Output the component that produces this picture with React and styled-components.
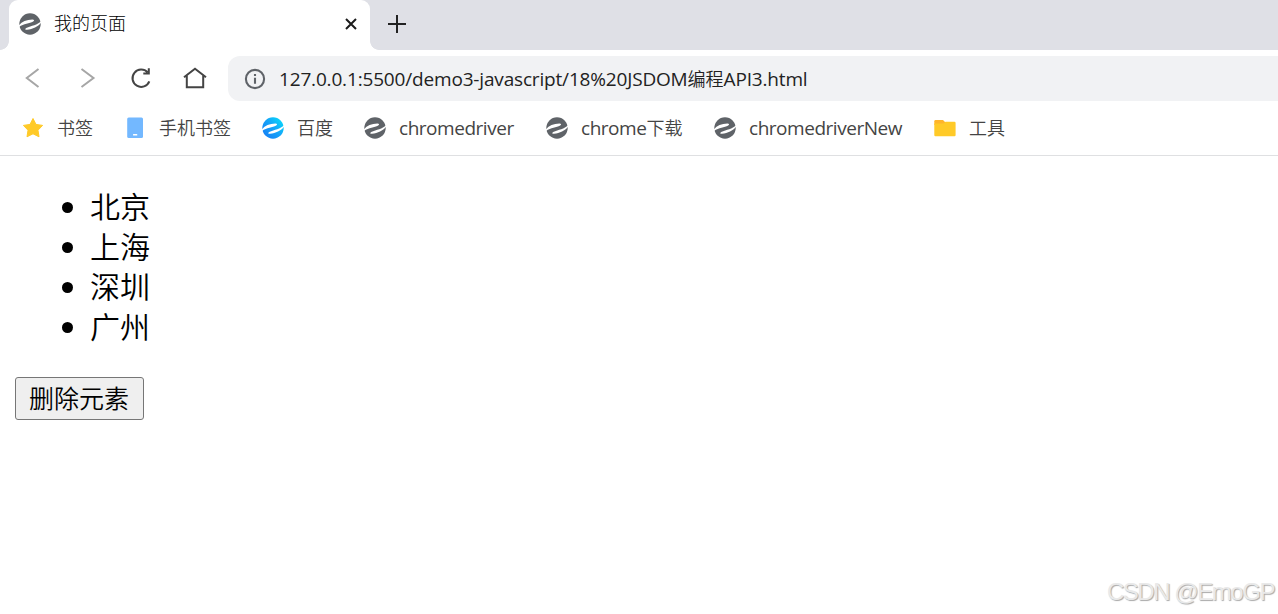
import React, { useState } from 'react'
import styled, { createGlobalStyle } from 'styled-components'

const bookmarks = [
    { icon: 'star', label: '书签', width: 36, gap: 31 },
    { icon: 'phone', label: '手机书签', width: 72, gap: 31 },
    { icon: 'blue', label: '百度', width: 36, gap: 31 },
    { icon: 'grey', label: 'chromedriver', width: 115, gap: 32 },
    { icon: 'grey', label: 'chrome下载', width: 102, gap: 31 },
    { icon: 'grey', label: 'chromedriverNew', width: 154, gap: 31 },
    { icon: 'folder', label: '工具', width: 36, gap: 0 }
]

// Chinese runs are set one size smaller than the latin text around them
const MixedText = ({ children }) => children.split(/([\u4e00-\u9fff]+)/).filter(Boolean).map((part, i) => (
    /[\u4e00-\u9fff]/.test(part) ? <Han key={i}>{part}</Han> : part
))

const Logo = ({ blue }) => (
    <Icon viewBox="0 0 22 22">
        <defs>
            <linearGradient id="logoBlue" x1="0.1" y1="0.8" x2="0.9" y2="0.1">
                <stop offset="0" stopColor="#1583f5" />
                <stop offset="0.5" stopColor="#16a4f8" />
                <stop offset="1" stopColor="#08d8fb" />
            </linearGradient>
        </defs>
        <circle cx="11" cy="11" r="10.7" fill={blue ? 'url(#logoBlue)' : '#5f6368'} />
        <path d="M0 12.2C3 8.6 7.5 6.6 13.4 6.5C15.4 6.5 15.6 7.7 14.2 8.5C10.3 10.7 5 10.4 0 14Z" fill="#fff" />
        <path d="M22 8.2C18.5 12 12.5 12.6 7.2 15C5.6 15.9 6.2 17 8 16.8C13.8 16.1 19 13.8 22 9.8Z" fill="#fff" />
    </Icon>
)

const BookmarkIcon = ({ name }) => {
    if(name === 'star') {
        return (
            <Icon viewBox="0 0 22 22">
                <path d="M11 1.5L14 7.4L20.6 8.4L16 13.2L17 19.8L11 16.8L5 19.8L6 13.2L1.4 8.4L8 7.4Z" fill="#ffca28" stroke="#ffca28" strokeWidth="1" strokeLinejoin="round" />
            </Icon>
        )
    }

    if(name === 'phone') {
        return (
            <Icon viewBox="0 0 22 22">
                <rect x="3.2" y="0.5" width="15.8" height="20.5" rx="1.5" fill="#73b8ff" />
                <rect x="9" y="17" width="4.3" height="1.5" rx="0.5" fill="#fff" />
            </Icon>
        )
    }

    if(name === 'folder') {
        return (
            <Icon viewBox="0 0 22 22">
                <path d="M0.3 4.2Q0.3 3 1.5 3H9L11 5V8H0.3Z" fill="#ffb52b" />
                <path d="M0.3 6.5H9.5L11.5 4.8H20.5Q21.6 4.8 21.6 6V18Q21.6 19.2 20.5 19.2H1.4Q0.3 19.2 0.3 18Z" fill="#ffca28" />
            </Icon>
        )
    }

    return <Logo blue={name === 'blue'} />
}

const App = () => {
    const [cities, setCities] = useState(['北京', '上海', '深圳', '广州'])

    return (
        <Window>
            <GlobalStyle />
            <TabStrip>
                <Tab>
                    <Logo />
                    <TabTitle>我的页面</TabTitle>
                    <CloseIcon viewBox="0 0 12 12">
                        <path d="M1 1L11 11M11 1L1 11" />
                    </CloseIcon>
                </Tab>
                <NewTabIcon viewBox="0 0 18 18">
                    <path d="M9 0V18M0 9H18" />
                </NewTabIcon>
            </TabStrip>
            <Toolbar>
                <NavIcon viewBox="0 0 24 24" color="#a6a6a6">
                    <path d="M17.5 3L5.8 12L17.5 21" />
                </NavIcon>
                <NavIcon viewBox="0 0 24 24" color="#a6a6a6">
                    <path d="M6.5 3L18.5 12L6.5 21" />
                </NavIcon>
                <NavIcon viewBox="0 0 24 24" color="#444">
                    <path d="M20.3 15.4A8.7 8.7 0 1 1 18.6 6.3M19.8 2.3V7.5H14.3" />
                </NavIcon>
                <NavIcon viewBox="0 0 24 24" color="#444">
                    <path d="M1 11.3L12 2.8L23 11.3M3.8 9.5V21.2H20.2V9.5" />
                </NavIcon>
                <AddressBar>
                    <InfoIcon viewBox="0 0 22 22">
                        <circle cx="11" cy="11" r="9.1" />
                        <path d="M11 9.7V15.8M11 6V8" />
                    </InfoIcon>
                    <Address>
                        <MixedText>127.0.0.1:5500/demo3-javascript/18%20JSDOM编程API3.html</MixedText>
                    </Address>
                </AddressBar>
            </Toolbar>
            <BookmarkBar>
                {bookmarks.map(({ icon, label, width, gap }) => (
                    <Bookmark key={label} gap={gap}>
                        <BookmarkIcon name={icon} />
                        <BookmarkLabel width={width}>
                            <MixedText>{label}</MixedText>
                        </BookmarkLabel>
                    </Bookmark>
                ))}
            </BookmarkBar>
            <Page>
                <CityList>
                    {cities.map(city => <City key={city}>{city}</City>)}
                </CityList>
                <DeleteButton onClick={() => setCities(cities.slice(1))}>删除元素</DeleteButton>
            </Page>
            <Watermark>CSDN @EmoGP</Watermark>
        </Window>
    )
}

const GlobalStyle = createGlobalStyle`
    body {
        margin: 0;
        background: #fff;
    }
`

const Window = styled.div`
    display: flex;
    flex-direction: column;
    position: relative;
    height: 614px;
    overflow: hidden;
    color: #000;
    font-family: 'Open Sans', 'Noto Sans CJK SC', sans-serif;
    font-weight: 350;
`

const Icon = styled.svg`
    flex: none;
    width: 22px;
    height: 22px;
`

const Han = styled.span`
    font-size: 18px;
    font-weight: 350;
    letter-spacing: 0;
`

const TabStrip = styled.div`
    display: flex;
    align-items: center;
    flex: none;
    height: 50px;
    background: #dfe0e6;
`

const Tab = styled.div`
    box-sizing: border-box;
    display: flex;
    align-items: center;
    position: relative;
    width: 361px;
    height: 50px;
    margin-left: 9px;
    padding: 0 13px 2px 10px;
    background: #fff;
    border-radius: 9px 9px 0 0;

    &::before,
    &::after {
        content: '';
        position: absolute;
        bottom: 0;
        width: 9px;
        height: 9px;
    }

    &::before {
        right: 100%;
        background: radial-gradient(circle at 0 0, transparent 8.5px, #fff 9.2px);
    }

    &::after {
        left: 100%;
        background: radial-gradient(circle at 100% 0, transparent 8.5px, #fff 9.2px);
    }
`

const TabTitle = styled.span`
    flex: 1;
    margin-left: 13px;
    padding-bottom: 2px;
    font-size: 18px;
    font-weight: 300;
    line-height: 22px;
`

const CloseIcon = styled.svg`
    width: 12px;
    height: 12px;
    stroke: #1b1b1b;
    stroke-width: 2;
`

const NewTabIcon = styled.svg`
    width: 18px;
    height: 18px;
    margin: 0 0 2px 18px;
    stroke: #222;
    stroke-width: 2;
`

const Toolbar = styled.div`
    display: flex;
    align-items: center;
    flex: none;
    gap: 30px;
    height: 45px;
    padding: 6px 0 0 21px;
`

const NavIcon = styled.svg`
    flex: none;
    width: 24px;
    height: 24px;
    margin-bottom: 1px;
    fill: none;
    stroke: ${props => props.color};
    stroke-width: 2;
`

const AddressBar = styled.div`
    display: flex;
    align-items: center;
    flex: 1;
    height: 45px;
    margin-left: -9px;
    padding-left: 16px;
    background: #f1f2f4;
    border-radius: 12px 0 0 12px;
`

const InfoIcon = styled.svg`
    flex: none;
    width: 22px;
    height: 22px;
    fill: none;
    stroke: #5f6368;
    stroke-width: 2.1;
`

const Address = styled.span`
    margin-left: 13px;
    color: #222;
    font-size: 19px;
    font-weight: 400;
    letter-spacing: -0.17px;
    line-height: 24px;
    white-space: nowrap;
`

const BookmarkBar = styled.div`
    display: flex;
    align-items: center;
    flex: none;
    height: 54px;
    padding-left: 22px;
    border-bottom: 1px solid #dfe0e2;
`

const Bookmark = styled.div`
    display: flex;
    align-items: center;
    margin-right: ${props => props.gap}px;
`

const BookmarkLabel = styled.span`
    width: ${props => props.width}px;
    margin-left: 13px;
    color: #444;
    font-size: 19px;
    font-weight: 400;
    letter-spacing: -0.47px;
    line-height: 24px;
    white-space: nowrap;
`

const Page = styled.div`
    padding: 31px 15px 0;
`

const CityList = styled.ul`
    margin: 0 0 30px;
    padding-left: 75px;
    font-size: 30px;
    line-height: 40px;
`

const City = styled.li`
    height: 40px;
`

const DeleteButton = styled.button`
    display: block;
    box-sizing: border-box;
    width: 129px;
    height: 43px;
    padding: 0 1px 0 0;
    color: #000;
    font: inherit;
    font-size: 25px;
    line-height: 39px;
    background: #efefef;
    border: 1px solid #767676;
    border-radius: 3px;
`

const Watermark = styled.div`
    position: absolute;
    right: 4px;
    bottom: 8px;
    color: #e9e9e9;
    font-family: 'Liberation Sans', sans-serif;
    font-size: 24px;
    font-weight: 400;
    letter-spacing: -1.45px;
    line-height: 28px;
    text-shadow: 1px 1px 1px #a8a8a8;
`

export default App
